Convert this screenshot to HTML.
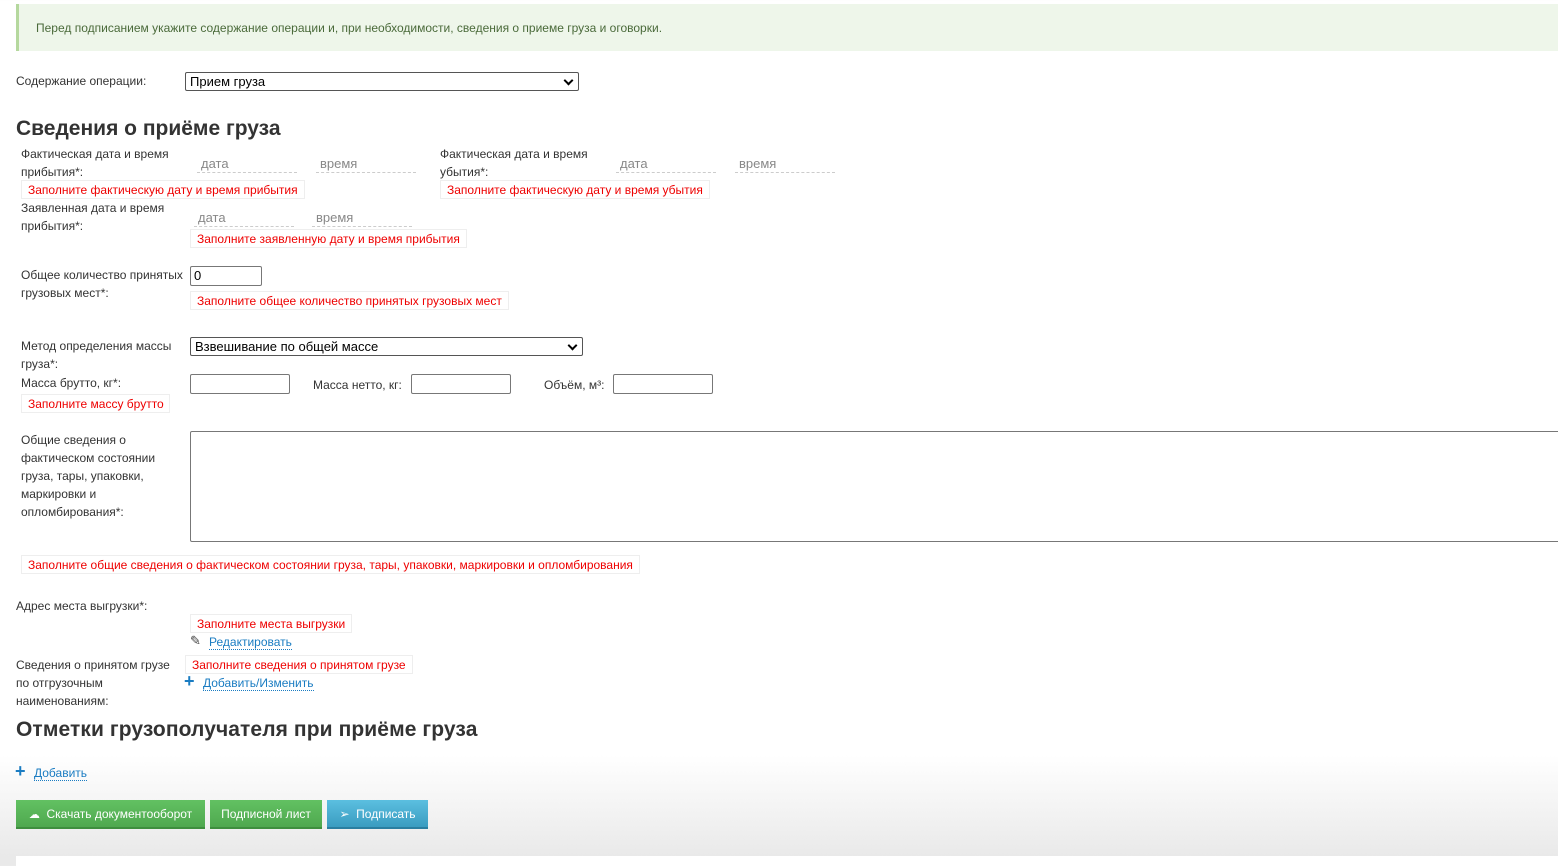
<!DOCTYPE html>
<html><head><meta charset="utf-8"><style>
*{box-sizing:border-box;margin:0;padding:0}
body{width:1558px;height:866px;position:relative;overflow:hidden;font-family:"Liberation Sans",Arial,sans-serif;font-size:12px;color:#333;background:linear-gradient(to bottom,#fff 0,#fff 755px,#e9e9e9 856px,#e9e9e9 866px)}
.a{position:absolute;white-space:nowrap}
.lbl{line-height:18px;color:#333}
.err{position:absolute;height:19px;border:1px solid #eee;background:#fff;color:#e00;padding:0 6px;line-height:18px;white-space:nowrap}
.ph{position:absolute;color:#888;font-size:13px;border-bottom:1px dashed #ccc;height:17px;line-height:16px;padding-left:4px}
.inp{position:absolute;border:1px solid #777;border-radius:2px;background:#fff;height:20px}
.sel{position:absolute;border:1px solid #555;border-radius:2px;background:#fff;height:19px;font-size:13px;color:#000;line-height:17px;padding-left:4px}
.sel:after{content:"";position:absolute;right:6px;top:4px;width:5px;height:5px;border-right:2px solid #000;border-bottom:2px solid #000;transform:rotate(45deg)}
.h{position:absolute;font-size:21px;font-weight:bold;color:#333;white-space:nowrap}
.lnk{color:#1a7cc2;border-bottom:1px dotted #1a7cc2;line-height:14px}
.plus{color:#1a7cc2;font-weight:bold;font-size:18px}
.btn{position:absolute;top:800px;height:29px;color:#fff;font-size:12px;line-height:28px;text-align:center;border-bottom:2px solid #3e8e3e}
.g{background:linear-gradient(#62c162,#4fa84f)}
.b{background:linear-gradient(#5bbfe0,#3a9cc0);border-bottom-color:#2a7ea0}
</style></head><body>
<div class="a" style="left:16px;top:4px;width:1542px;height:47px;background:#eef6ea;border-left:3px solid #b5d89e"></div>
<div class="a" style="left:36px;top:21px;color:#4a6a3a;">Перед подписанием укажите содержание операции и, при необходимости, сведения о приеме груза и оговорки.</div>

<div class="a lbl" style="left:16px;top:72px">Содержание операции:</div>
<div class="sel" style="left:185px;top:72px;width:394px">Прием груза</div>

<div class="h" style="left:16px;top:117px">Сведения о приёме груза</div>

<div class="a lbl" style="left:21px;top:145px">Фактическая дата и время<br>прибытия*:</div>
<div class="ph" style="left:197px;top:156px;width:100px">дата</div>
<div class="ph" style="left:316px;top:156px;width:100px">время</div>
<div class="err" style="left:21px;top:180px;width:284px">Заполните фактическую дату и время прибытия</div>

<div class="a lbl" style="left:440px;top:145px">Фактическая дата и время<br>убытия*:</div>
<div class="ph" style="left:616px;top:156px;width:100px">дата</div>
<div class="ph" style="left:735px;top:156px;width:100px">время</div>
<div class="err" style="left:440px;top:180px;width:270px">Заполните фактическую дату и время убытия</div>

<div class="a lbl" style="left:21px;top:199px">Заявленная дата и время<br>прибытия*:</div>
<div class="ph" style="left:194px;top:210px;width:100px">дата</div>
<div class="ph" style="left:312px;top:210px;width:100px">время</div>
<div class="err" style="left:190px;top:229px;width:277px">Заполните заявленную дату и время прибытия</div>

<div class="a lbl" style="left:21px;top:266px">Общее количество принятых<br>грузовых мест*:</div>
<div class="inp" style="left:190px;top:266px;width:72px;padding-left:3px;font-size:13px;line-height:18px;color:#000">0</div>
<div class="err" style="left:190px;top:291px;width:319px">Заполните общее количество принятых грузовых мест</div>

<div class="a lbl" style="left:21px;top:337px">Метод определения массы<br>груза*:</div>
<div class="sel" style="left:190px;top:337px;width:393px">Взвешивание по общей массе</div>

<div class="a lbl" style="left:21px;top:374px">Масса брутто, кг*:</div>
<div class="inp" style="left:190px;top:374px;width:100px"></div>
<div class="a lbl" style="left:313px;top:376px">Масса нетто, кг:</div>
<div class="inp" style="left:411px;top:374px;width:100px"></div>
<div class="a lbl" style="left:544px;top:376px">Объём, м³:</div>
<div class="inp" style="left:613px;top:374px;width:100px"></div>
<div class="err" style="left:21px;top:394px;width:149px">Заполните массу брутто</div>

<div class="a lbl" style="left:21px;top:431px">Общие сведения о<br>фактическом состоянии<br>груза, тары, упаковки,<br>маркировки и<br>опломбирования*:</div>
<div class="inp" style="left:190px;top:431px;width:1380px;height:111px"></div>
<div class="err" style="left:21px;top:555px;width:619px">Заполните общие сведения о фактическом состоянии груза, тары, упаковки, маркировки и опломбирования</div>

<div class="a lbl" style="left:16px;top:597px">Адрес места выгрузки*:</div>
<div class="err" style="left:190px;top:614px;width:162px">Заполните места выгрузки</div>
<div class="a" style="left:190px;top:633px;font-size:13px;color:#444">✎</div>
<div class="a" style="left:209px;top:635px"><span class="lnk">Редактировать</span></div>

<div class="a lbl" style="left:16px;top:656px">Сведения о принятом грузе<br>по отгрузочным<br>наименованиям:</div>
<div class="err" style="left:185px;top:655px;width:228px">Заполните сведения о принятом грузе</div>
<div class="a plus" style="left:184px;top:671px">+</div>
<div class="a" style="left:203px;top:676px"><span class="lnk">Добавить/Изменить</span></div>

<div class="h" style="left:16px;top:718px;letter-spacing:0.1px">Отметки грузополучателя при приёме груза</div>

<div class="a plus" style="left:15px;top:761px">+</div>
<div class="a" style="left:34px;top:766px"><span class="lnk">Добавить</span></div>

<div class="btn g" style="left:16px;width:189px"><span style="font-size:11px">☁</span>&nbsp; Скачать документооборот</div>
<div class="btn g" style="left:210px;width:112px">Подписной лист</div>
<div class="btn b" style="left:327px;width:101px">➢ &nbsp;Подписать</div>

<div class="a" style="left:16px;top:856px;width:1542px;height:10px;background:#fff"></div>
</body></html>
